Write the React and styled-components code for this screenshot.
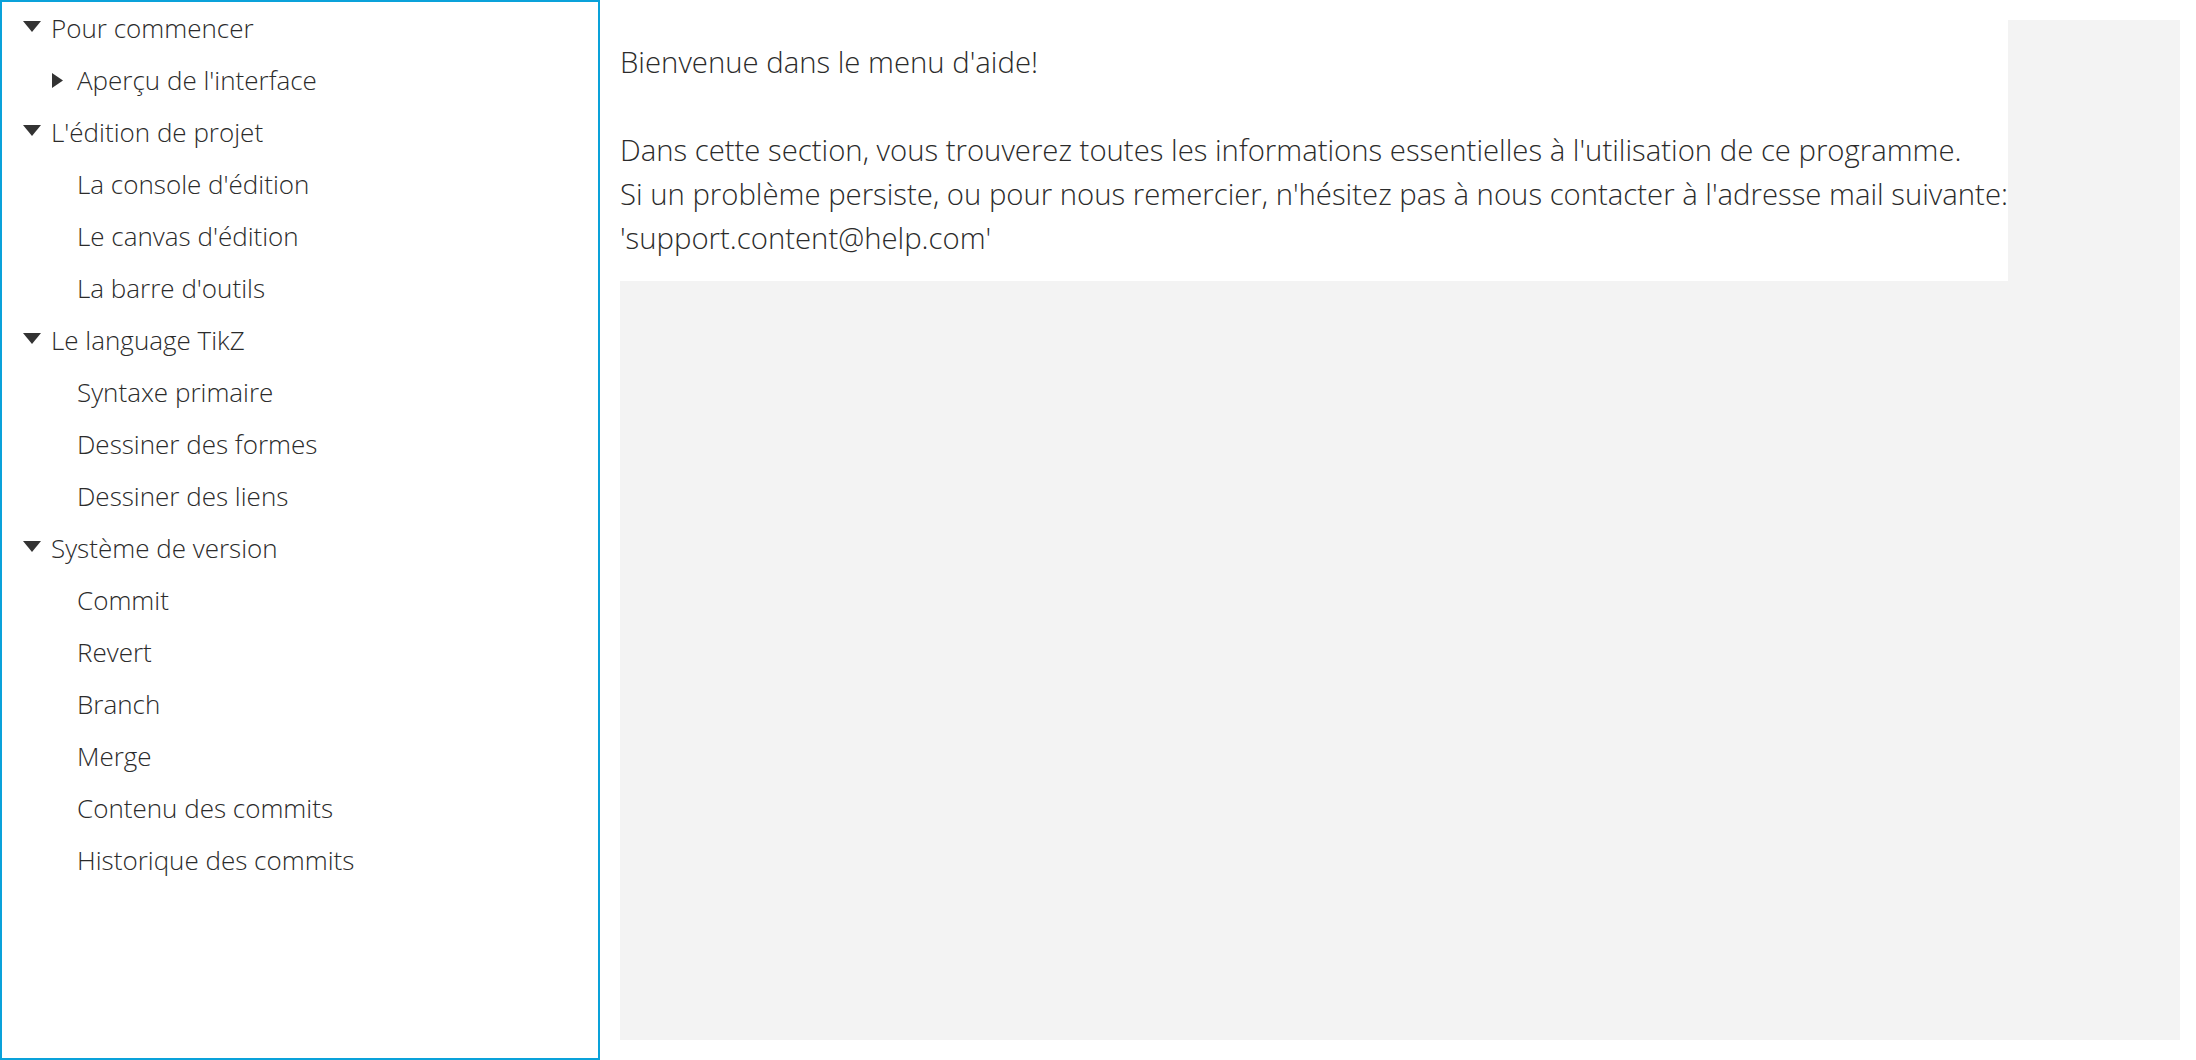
import React, { useState } from "react";
import styled, { createGlobalStyle } from "styled-components";

const GlobalStyle = createGlobalStyle`
  html, body {
    margin: 0;
    padding: 0;
    background: #fff;
  }
  body {
    font-family: "Open Sans", "Liberation Sans", sans-serif;
    font-weight: 300;
    color: #2b2b2b;
  }
`;

const sections = [
  {
    title: "Pour commencer",
    items: [{ title: "Aperçu de l'interface", items: [] }],
  },
  {
    title: "L'édition de projet",
    items: ["La console d'édition", "Le canvas d'édition", "La barre d'outils"],
  },
  {
    title: "Le language TikZ",
    items: ["Syntaxe primaire", "Dessiner des formes", "Dessiner des liens"],
  },
  {
    title: "Système de version",
    items: [
      "Commit",
      "Revert",
      "Branch",
      "Merge",
      "Contenu des commits",
      "Historique des commits",
    ],
  },
];

function Caret({ open, small }) {
  return (
    <CaretBox $small={small}>
      {open ? (
        <svg width="18" height="11" viewBox="0 0 18 11">
          <polygon points="0,0 18,0 9,11" fill="#333" />
        </svg>
      ) : (
        <svg width="11" height="15" viewBox="0 0 11 15">
          <polygon points="0,0 11,7.5 0,15" fill="#333" />
        </svg>
      )}
    </CaretBox>
  );
}

function Group({ title, items }) {
  const [open, setOpen] = useState(true);
  return (
    <li>
      <Row $level={1} onClick={() => setOpen(!open)}>
        <Caret open={open} />
        {title}
      </Row>
      {open && (
        <ul>
          {items.map((item) =>
            typeof item === "string" ? (
              <li key={item}>
                <Row $level={2} $leaf>
                  {item}
                </Row>
              </li>
            ) : (
              <li key={item.title}>
                <Row $level={2}>
                  <Caret open={false} small />
                  {item.title}
                </Row>
              </li>
            )
          )}
        </ul>
      )}
    </li>
  );
}

function App() {
  return (
    <>
      <GlobalStyle />
      <Page>
        <Sidebar>
          <ul>
            {sections.map((s) => (
              <Group key={s.title} title={s.title} items={s.items} />
            ))}
          </ul>
        </Sidebar>
        <Main>
          <Panel>
            <Intro>
              Bienvenue dans le menu d'aide!
              <br />
              <br />
              Dans cette section, vous trouverez toutes les informations
              essentielles à l'utilisation de ce programme.
              <br />
              Si un problème persiste, ou pour nous remercier, n'hésitez pas à
              nous contacter à l'adresse mail suivante:
              <br />
              'support.content@help.com'
            </Intro>
          </Panel>
        </Main>
      </Page>
    </>
  );
}

const Page = styled.div`
  display: flex;
  height: 1060px;
  overflow: hidden;
`;

const Sidebar = styled.nav`
  box-sizing: border-box;
  width: 600px;
  flex-shrink: 0;
  height: 100%;
  border: 2px solid #0aa2da;
  background: #fff;

  ul {
    list-style: none;
    margin: 0;
    padding: 0;
  }
`;

const Row = styled.div`
  display: flex;
  align-items: center;
  height: 52px;
  font-size: 26px;
  line-height: 52px;
  white-space: nowrap;
  cursor: pointer;
  padding-left: ${({ $level, $leaf }) =>
    $level === 1 ? "21px" : $leaf ? "75px" : "50px"};
`;

const CaretBox = styled.span`
  display: inline-flex;
  align-items: center;
  justify-content: flex-start;
  width: ${({ $small }) => ($small ? "25px" : "28px")};
  flex-shrink: 0;
  margin-top: ${({ $small }) => ($small ? "0" : "-3px")};
`;

const Main = styled.main`
  flex: 1;
  display: flex;
  padding: 20px 16px 20px 20px;
`;

const Panel = styled.section`
  flex: 1;
  background: #f3f3f3;
`;

const Intro = styled.div`
  width: fit-content;
  background: #fff;
  padding: 20px 0 21px;
  font-size: 29.3px;
  line-height: 44px;
  white-space: nowrap;
`;

export default App;
